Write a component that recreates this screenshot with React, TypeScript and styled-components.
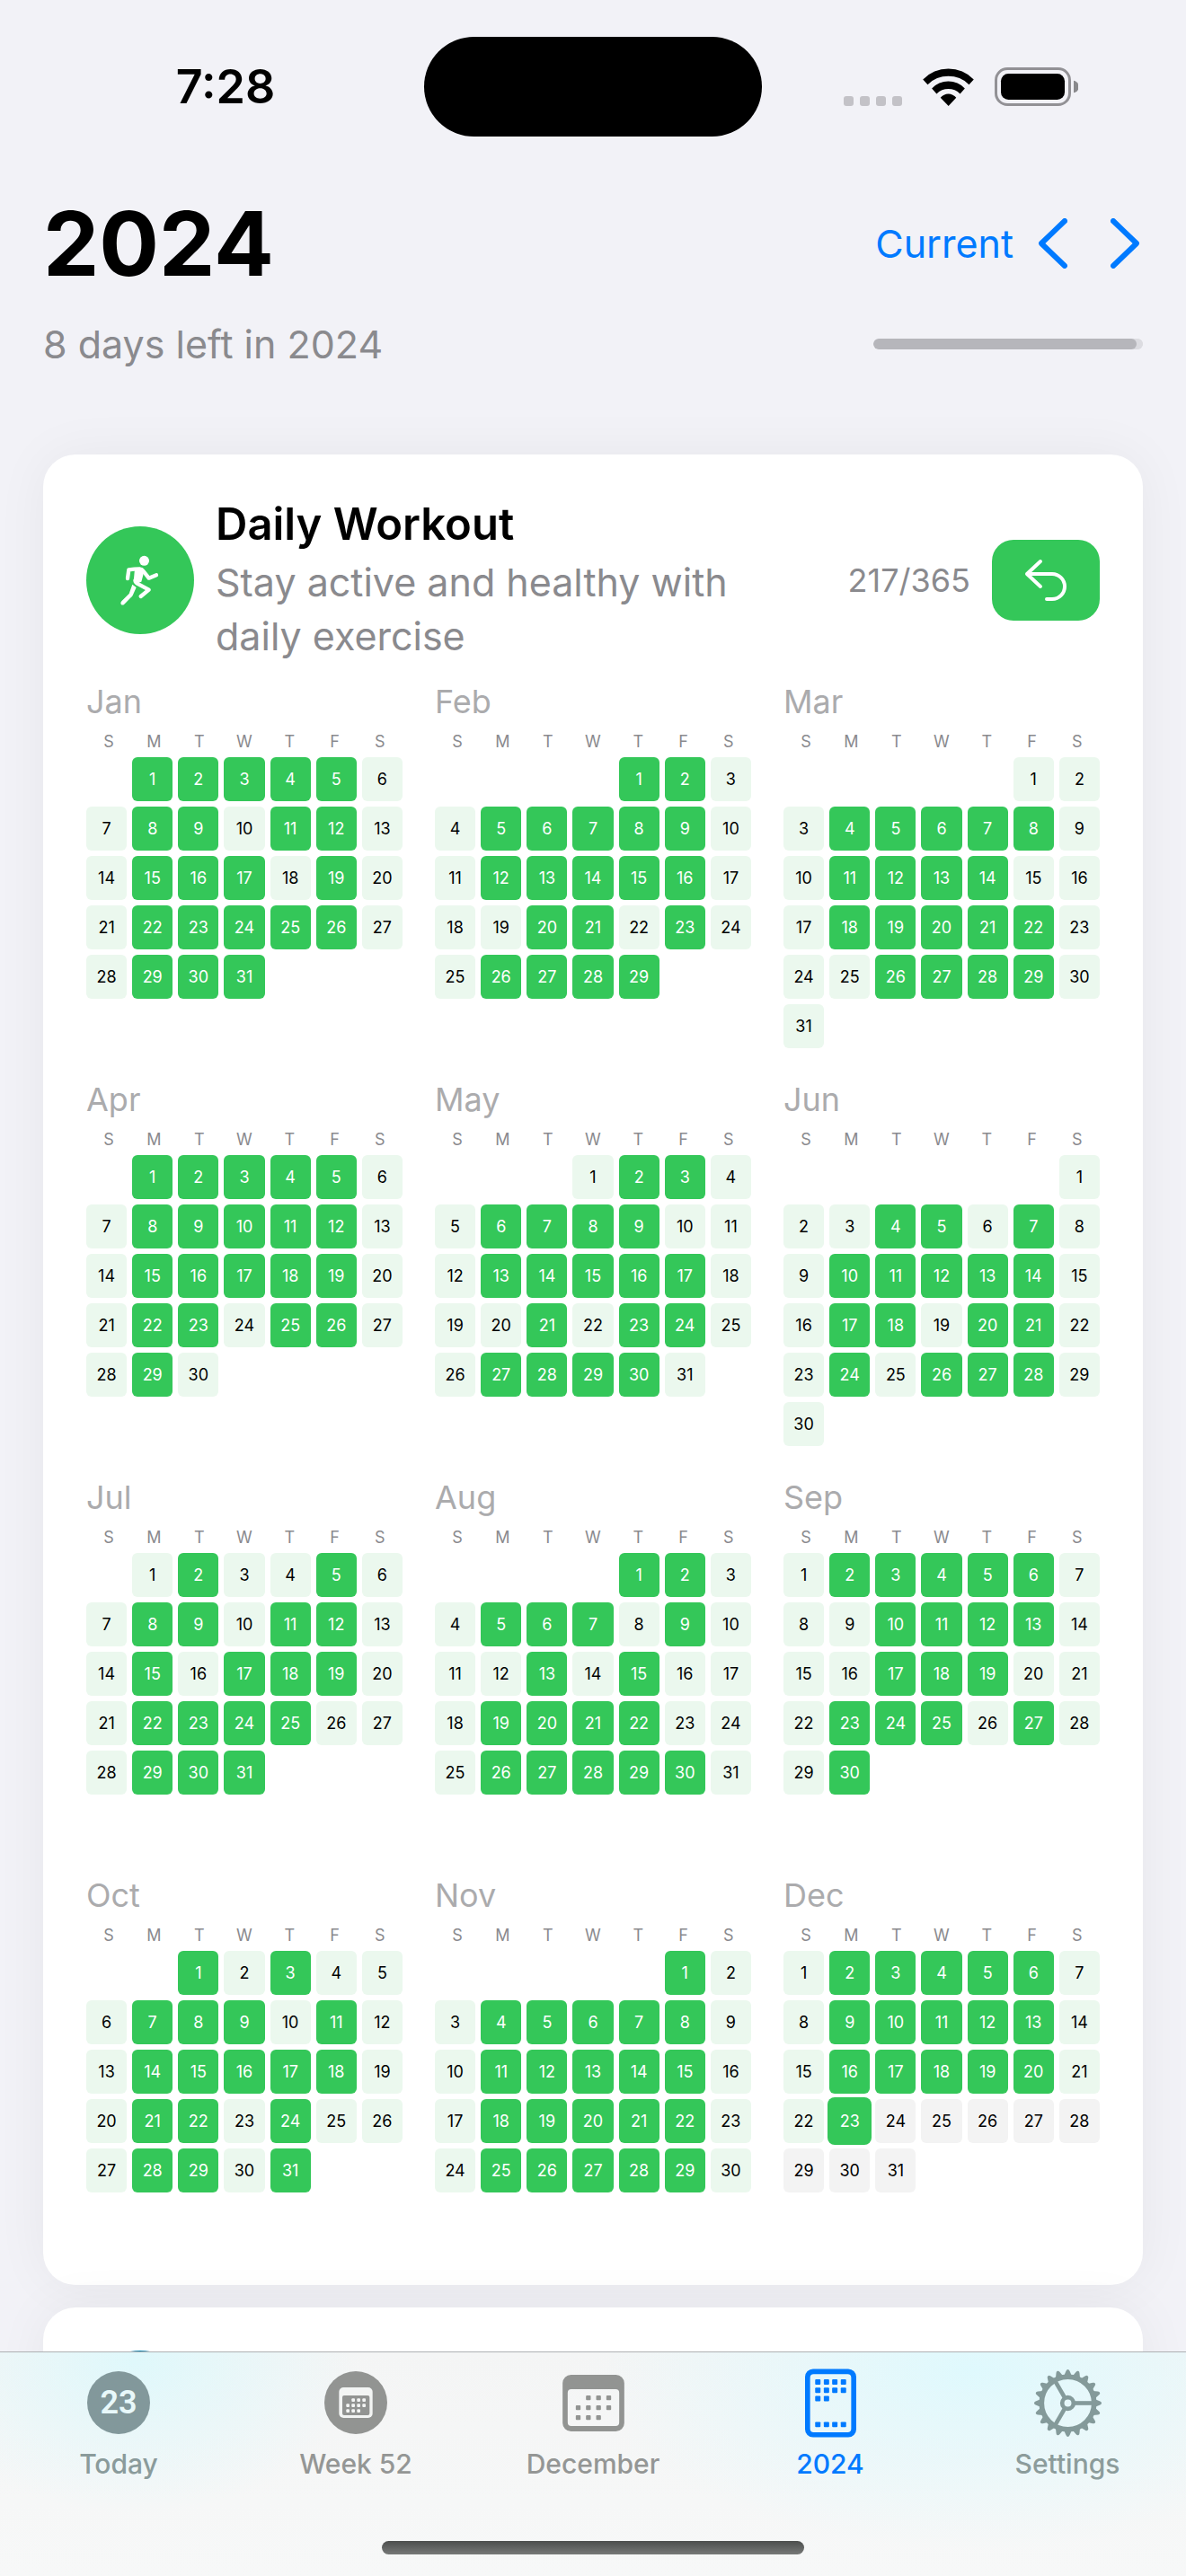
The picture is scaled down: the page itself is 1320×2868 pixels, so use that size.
import React from "react";
import styled, { createGlobalStyle, css } from "styled-components";

const color = {
  page: "#f2f2f7",
  card: "#ffffff",
  ink: "#000000",
  muted: "#8a8a8e",
  faint: "#ababad",
  blue: "#007aff",
  green: "#34c759",
  greenTint: "#ebf8ee",
  upcoming: "#f3f3f3",
  teal: "#0a84b0",
};

const GlobalStyle = createGlobalStyle`
  *, *::before, *::after { box-sizing: border-box; }
  body {
    margin: 0;
    background: ${color.page};
    color: ${color.ink};
    font-family: Inter, "Liberation Sans", sans-serif;
  }
  h1, h2, h3, p, ol, ul { margin: 0; padding: 0; font-weight: inherit; }
  ol, ul { list-style: none; }
  svg { display: block; flex: none; }
  button { border: 0; padding: 0; background: none; font: inherit; color: inherit; cursor: pointer; }
`;

const Screen = styled.div`
  display: flex;
  flex-direction: column;
  height: 100vh;
  overflow: hidden;
`;

const Content = styled.main`
  flex: 1;
  min-height: 0;
  overflow: hidden;
`;

const StatusBar = styled.div`
  display: grid;
  grid-template-columns: 1fr 376px 1fr;
  align-items: center;
  padding: 41px 0 59px;
`;

const Clock = styled.div`
  padding-left: 30px;
  text-align: center;
  font-size: 52px;
  line-height: 60px;
  font-weight: 600;
`;

const Island = styled.div`
  height: 111px;
  border-radius: 56px;
  background: #000;
`;

const StatusIcons = styled.div`
  display: flex;
  align-items: center;
  justify-content: center;
  gap: 23px;
  padding-right: 30px;
`;

const Header = styled.header`
  display: grid;
  grid-template-columns: 1fr 300px;
  align-items: center;
  row-gap: 22px;
  padding: 0 48px;
`;

const Year = styled.h1`
  font-size: 99px;
  line-height: 120px;
  font-weight: 700;
`;

const Pager = styled.div`
  display: flex;
  align-items: center;
  justify-content: flex-end;
  padding-right: 4px;
  color: ${color.blue};
`;

const CurrentButton = styled.button`
  margin-right: 28px;
  font-size: 43px;
  line-height: 60px;
`;

const ArrowButton = styled.button`
  & + & { margin-left: 48px; }
`;

const Remaining = styled.p`
  font-size: 43px;
  line-height: 60px;
  color: ${color.muted};
`;

const YearProgress = styled.progress`
  appearance: none;
  display: block;
  width: 100%;
  height: 12px;
  border: 0;
  border-radius: 6px;
  overflow: hidden;
  background: #dcdce1;
  &::-webkit-progress-bar { background: #dcdce1; border-radius: 6px; }
  &::-webkit-progress-value { background: #b6b6bb; border-radius: 6px; }
`;

const Cards = styled.div`
  display: flex;
  flex-direction: column;
  gap: 25px;
  padding: 93px 48px 24px;
`;

const Card = styled.section`
  display: flex;
  flex-direction: column;
  gap: 22px;
  padding: 48px;
  border-radius: 36px;
  background: ${color.card};
  box-shadow: 0 0 60px rgba(0, 0, 0, 0.05);
`;

const CardHeader = styled.div`
  display: flex;
  align-items: center;
  gap: 24px;
`;

const HabitBadge = styled.div<{ $tone: string }>`
  flex: none;
  width: 120px;
  height: 120px;
  border-radius: 50%;
  background: ${(p) => p.$tone};
  color: #fff;
`;

const HabitText = styled.div`
  display: flex;
  flex: 1;
  flex-direction: column;
  gap: 4px;
  min-width: 0;
  padding-right: 48px;
`;

const HabitName = styled.h2`
  font-size: 49px;
  line-height: 60px;
  font-weight: 600;
`;

const HabitNote = styled.p`
  font-size: 43px;
  line-height: 60px;
  color: ${color.muted};
`;

const Count = styled.span`
  flex: none;
  font-size: 36px;
  line-height: 43px;
  color: ${color.muted};
`;

const UndoButton = styled.button`
  display: flex;
  flex: none;
  align-items: center;
  justify-content: center;
  width: 120px;
  height: 90px;
  border-radius: 24px;
  background: ${color.green};
  color: #fff;
`;

const Months = styled.div`
  display: grid;
  grid-template-columns: repeat(3, 1fr);
  gap: 36px;
`;

const MonthName = styled.h3`
  font-size: 36px;
  line-height: 43px;
  color: ${color.faint};
`;

const Weekdays = styled.div`
  display: grid;
  grid-template-columns: repeat(7, 1fr);
  padding: 11px 0 5px;
  font-size: 18px;
  line-height: 24px;
  text-align: center;
  color: ${color.muted};
`;

const Days = styled.ol`
  display: grid;
  grid-template-columns: repeat(7, 1fr);
  grid-template-rows: repeat(6, 49px);
  gap: 6px;
`;

type DayState = "done" | "open" | "upcoming";

const dayTone = {
  done: css`background: ${color.green}; color: #fff;`,
  open: css`background: ${color.greenTint};`,
  upcoming: css`background: ${color.upcoming};`,
};

const Day = styled.li<{ $state: DayState; $start?: number; $today: boolean }>`
  display: flex;
  align-items: center;
  justify-content: center;
  border-radius: 6px;
  font-size: 18px;
  line-height: 24px;
  grid-column-start: ${(p) => p.$start ?? "auto"};
  ${(p) => dayTone[p.$state]}
  ${(p) => p.$today && css`box-shadow: 0 0 0 2px ${color.green};`}
`;

const TabBar = styled.nav`
  flex: none;
  border-top: 1px solid #aeb0b3;
  background:
    radial-gradient(ellipse 250px 170px at 150px 10px, #dff8fb, rgba(223, 248, 251, 0)),
    radial-gradient(ellipse 420px 200px at 82% 20px, #dff9fd, rgba(223, 249, 253, 0)),
    linear-gradient(#f4f5f5, #f7f8f8);
`;

const Tabs = styled.ul`
  display: grid;
  grid-template-columns: repeat(5, 1fr);
  padding-top: 16px;
`;

const Tab = styled.button<{ $tone: string }>`
  display: flex;
  flex-direction: column;
  align-items: center;
  gap: 10px;
  width: 100%;
  color: ${(p) => p.$tone};
  font-size: 30px;
  line-height: 36px;
  font-weight: 500;
`;

const TabIcon = styled.span`
  display: flex;
  align-items: center;
  justify-content: center;
  height: 80px;
`;

const TodayBadge = styled.span`
  display: flex;
  align-items: center;
  justify-content: center;
  width: 70px;
  height: 70px;
  border-radius: 50%;
  background: #82989b;
  color: #e8f8fa;
  font-family: Roboto, Inter, sans-serif;
  font-size: 36px;
  line-height: 40px;
  font-weight: 600;
`;

const HomeIndicator = styled.div`
  width: 470px;
  height: 15px;
  margin: 68px auto 24px;
  border-radius: 8px;
  background: linear-gradient(#4c4e4d, #777978);
`;

function SignalDots() {
  return (
    <svg width="65" height="42" viewBox="0 0 65 42" fill="#c3c2c7">
      {[0, 18, 36, 54].map((x) => (
        <rect key={x} x={x} y="31" width="11" height="11" rx="3" />
      ))}
    </svg>
  );
}

function WifiIcon() {
  return (
    <svg width="57" height="42" viewBox="315 75 171 127">
      <path d="M315 113A118 118 0 0 1 486 113L470 130A98 98 0 0 0 331 130Z" />
      <path d="M345 143A76 76 0 0 1 456 143L440 161A55 55 0 0 0 361 161Z" />
      <path d="M374 174A34 34 0 0 1 427 174L401 202Z" />
    </svg>
  );
}

function BatteryIcon() {
  return (
    <svg width="93" height="43" viewBox="555 75 279 129">
      <rect x="559.500" y="79.500" width="246" height="120" rx="38" fill="none" stroke="#929195" strokeWidth="9" />
      <rect x="576" y="96" width="213" height="87" rx="25" />
      <path d="M819 119A21 21 0 0 1 819 160Z" fill="#89898c" />
    </svg>
  );
}

function Chevron({ flip = false }: { flip?: boolean }) {
  return (
    <svg width="32" height="56" viewBox="0 0 32 56" fill="none" stroke="currentColor" strokeWidth="6" strokeLinecap="round" strokeLinejoin="round">
      <path d={flip ? "M3 3L29 28L3 53" : "M29 3L3 28L29 53"} />
    </svg>
  );
}

function RunnerIcon() {
  return (
    <svg width="120" height="120" viewBox="18 15 360 360" fill="none" stroke="currentColor" strokeWidth="13" strokeLinecap="round" strokeLinejoin="round">
      <circle cx="211.500" cy="130" r="16.500" fill="currentColor" stroke="none" />
      <path d="M156 189L160 160Q178 157 196 157Q204 158 209 165L227 188L252 178" />
      <path d="M180 156H200Q212 162 208 178L202 200L184 206Q174 202 177 190Z" fill="currentColor" stroke="none" />
      <path d="M182 194Q180 201 188 206L227 227L200 249" />
      <path d="M172 209L185 219L173 246Q171 250 167 253L145 275Q139 280 134 275Q131 270 136 265L161 240Z" fill="currentColor" stroke="none" />
    </svg>
  );
}

function UndoIcon() {
  return (
    <svg width="48" height="48" viewBox="0 0 48 48" fill="none" stroke="currentColor" strokeWidth="4" strokeLinecap="round" strokeLinejoin="round">
      <path d="M18 3L3 17L18 31M3 17H31A14 14 0 0 1 31 45H25" />
    </svg>
  );
}

function Dots({ xs, rows, size }: { xs: number[]; rows: [number, number[]][]; size: number }) {
  return (
    <>
      {rows.map(([y, cols]) =>
        cols.map((c) => <rect key={`${y}-${c}`} x={xs[c]} y={y} width={size} height={size} rx="3" />)
      )}
    </>
  );
}

function WeekIcon() {
  return (
    <svg width="70" height="70" viewBox="62 60 210 210" fill="#929492">
      <circle cx="167" cy="165" r="105" />
      <rect x="111" y="114" width="112" height="102" rx="15" fill="#f3f5f4" />
      <rect x="122" y="141" width="91" height="66" rx="6" />
      <g fill="#f3f5f4">
        <Dots xs={[135, 153, 171, 189]} size={11} rows={[[151, [1, 2, 3]], [169, [0, 1, 2, 3]], [187, [0, 1, 2]]]} />
      </g>
    </svg>
  );
}

function MonthIcon() {
  return (
    <svg width="69" height="63" viewBox="0 0 206 189" fill="#929492">
      <path
        fillRule="evenodd"
        d="M28 0H178A28 28 0 0 1 206 28V161A28 28 0 0 1 178 189H28A28 28 0 0 1 0 161V28A28 28 0 0 1 28 0ZM29 48A12 12 0 0 0 17 60V159A12 12 0 0 0 29 171H177A12 12 0 0 0 189 159V60A12 12 0 0 0 177 48Z"
      />
      <Dots xs={[44, 78, 112, 146]} size={16} rows={[[69, [1, 2, 3]], [102, [0, 1, 2, 3]], [135, [0, 1, 2]]]} />
    </svg>
  );
}

function YearIcon() {
  return (
    <svg width="57" height="77" viewBox="0 0 172 230" fill="currentColor">
      <path
        fillRule="evenodd"
        d="M27 0H145A27 27 0 0 1 172 27V203A27 27 0 0 1 145 230H27A27 27 0 0 1 0 203V27A27 27 0 0 1 27 0ZM29 18A12 12 0 0 0 17 30V201A12 12 0 0 0 29 213H143A12 12 0 0 0 155 201V30A12 12 0 0 0 143 18Z"
      />
      <Dots xs={[34, 63, 91, 120]} size={18} rows={[[35, [0, 1, 2, 3]], [63, [0, 1, 2, 3]], [91, [0, 1]], [178, [0, 1, 2, 3]]]} />
    </svg>
  );
}

function GearIcon() {
  const teeth = Array.from({ length: 20 }, (_, i) => i * 18);
  return (
    <svg width="75" height="75" viewBox="-113 -113 226 226" fill="none" stroke="#849a9a">
      <circle r="88" strokeWidth="17" />
      <circle r="19" strokeWidth="14" />
      {[0, 120, 240].map((a) => (
        <path key={a} d="M22 0H84" strokeWidth="14" transform={`rotate(${a})`} />
      ))}
      {teeth.map((a) => (
        <path key={a} d="M92 -13L108 -6Q113 -4 113 0Q113 4 108 6L92 13Z" fill="#849a9a" stroke="none" transform={`rotate(${a})`} />
      ))}
    </svg>
  );
}

const YEAR = 2024;
const TODAY = { month: 11, day: 23 };

/* Weekdays on which the habit was skipped, month by month. */
const MONTHS: { name: string; skipped: number[] }[] = [
  { name: "Jan", skipped: [10, 18] },
  { name: "Feb", skipped: [19, 22] },
  { name: "Mar", skipped: [1, 15, 25] },
  { name: "Apr", skipped: [24, 30] },
  { name: "May", skipped: [1, 10, 20, 22, 31] },
  { name: "Jun", skipped: [3, 6, 19, 25] },
  { name: "Jul", skipped: [1, 3, 4, 10, 16, 26] },
  { name: "Aug", skipped: [8, 12, 14, 16, 23] },
  { name: "Sep", skipped: [9, 16, 20, 26] },
  { name: "Oct", skipped: [2, 4, 10, 23, 25, 30] },
  { name: "Nov", skipped: [] },
  { name: "Dec", skipped: [] },
];

function stateOf(month: number, day: number): DayState {
  if (month === TODAY.month && day > TODAY.day) return "upcoming";
  const weekday = new Date(YEAR, month, day).getDay();
  const rest = weekday === 0 || weekday === 6;
  return rest || MONTHS[month].skipped.includes(day) ? "open" : "done";
}

function Month({ index }: { index: number }) {
  const first = new Date(YEAR, index, 1).getDay();
  const length = new Date(YEAR, index + 1, 0).getDate();
  return (
    <section>
      <MonthName>{MONTHS[index].name}</MonthName>
      <Weekdays>
        {["S", "M", "T", "W", "T", "F", "S"].map((d, i) => (
          <span key={i}>{d}</span>
        ))}
      </Weekdays>
      <Days>
        {Array.from({ length }, (_, i) => i + 1).map((day) => (
          <Day
            key={day}
            $state={stateOf(index, day)}
            $start={day === 1 ? first + 1 : undefined}
            $today={index === TODAY.month && day === TODAY.day}
          >
            {day}
          </Day>
        ))}
      </Days>
    </section>
  );
}

const TABS = [
  { label: "Today", tone: "#8a9b9b", icon: <TodayBadge>23</TodayBadge> },
  { label: "Week 52", tone: "#949695", icon: <WeekIcon /> },
  { label: "December", tone: "#949695", icon: <MonthIcon /> },
  { label: "2024", tone: color.blue, icon: <YearIcon /> },
  { label: "Settings", tone: "#8c9c9b", icon: <GearIcon /> },
];

export default function App() {
  return (
    <Screen>
      <GlobalStyle />
      <Content>
        <StatusBar>
          <Clock>7:28</Clock>
          <Island />
          <StatusIcons>
            <SignalDots />
            <WifiIcon />
            <BatteryIcon />
          </StatusIcons>
        </StatusBar>
        <Header>
          <Year>2024</Year>
          <Pager>
            <CurrentButton type="button">Current</CurrentButton>
            <ArrowButton type="button" aria-label="Previous year">
              <Chevron />
            </ArrowButton>
            <ArrowButton type="button" aria-label="Next year">
              <Chevron flip />
            </ArrowButton>
          </Pager>
          <Remaining id="remaining">8 days left in 2024</Remaining>
          <YearProgress aria-labelledby="remaining" max={366} value={358} />
        </Header>
        <Cards>
          <Card>
            <CardHeader>
              <HabitBadge $tone={color.green}>
                <RunnerIcon />
              </HabitBadge>
              <HabitText>
                <HabitName>Daily Workout</HabitName>
                <HabitNote>Stay active and healthy with daily exercise</HabitNote>
              </HabitText>
              <Count>217/365</Count>
              <UndoButton type="button" aria-label="Undo">
                <UndoIcon />
              </UndoButton>
            </CardHeader>
            <Months>
              {MONTHS.map((m, i) => (
                <Month key={m.name} index={i} />
              ))}
            </Months>
          </Card>
          <Card>
            <CardHeader>
              <HabitBadge $tone={color.teal} />
            </CardHeader>
          </Card>
        </Cards>
      </Content>
      <TabBar>
        <Tabs>
          {TABS.map((t) => (
            <li key={t.label}>
              <Tab type="button" $tone={t.tone} aria-current={t.label === "2024" ? "page" : undefined}>
                <TabIcon>{t.icon}</TabIcon>
                {t.label}
              </Tab>
            </li>
          ))}
        </Tabs>
        <HomeIndicator />
      </TabBar>
    </Screen>
  );
}
